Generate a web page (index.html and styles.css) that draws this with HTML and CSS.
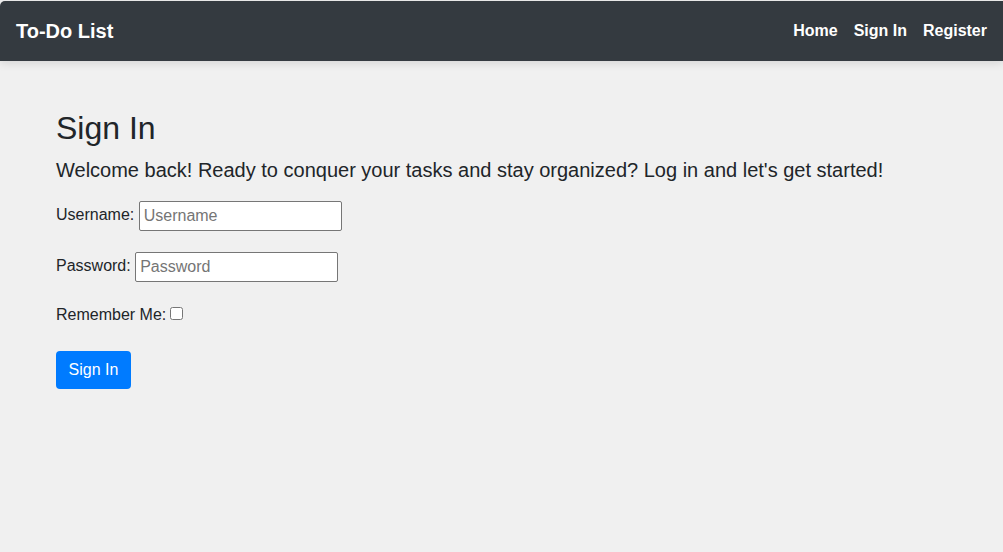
FILE: index.html
```html
<!DOCTYPE html>
<html lang="en">
<head>
<meta charset="utf-8">
<title>Sign In - To-Do List</title>
<link rel="stylesheet" href="styles.css">
</head>
<body>
<header class="navbar">
  <a class="brand" href="#">To-Do List</a>
  <nav class="nav-links">
    <a href="#">Home</a>
    <a href="#">Sign In</a>
    <a href="#">Register</a>
  </nav>
</header>
<main class="content">
  <h1 class="title">Sign In</h1>
  <p class="lead">Welcome back! Ready to conquer your tasks and stay organized? Log in and let's get started!</p>
  <form class="signin-form">
    <div class="form-row">
      <label for="username">Username:</label> <input class="text-input" type="text" id="username" placeholder="Username">
    </div>
    <div class="form-row">
      <label for="password">Password:</label> <input class="text-input" type="password" id="password" placeholder="Password">
    </div>
    <div class="form-row check-row">
      <label for="remember">Remember Me:</label> <input class="check" type="checkbox" id="remember">
    </div>
    <button class="btn-primary" type="submit">Sign In</button>
  </form>
</main>
</body>
</html>
```

FILE: styles.css
```css
html, body {
  margin: 0;
  padding: 0;
}
body {
  background: #f0f0f0;
  color: #212529;
  font-family: "Liberation Sans", Arial, sans-serif;
  font-size: 16px;
  line-height: 1.5;
  min-height: 552px;
}
.navbar {
  margin-top: 1px;
  height: 60px;
  background: #343a40;
  border-top-left-radius: 5px;
  display: flex;
  align-items: center;
  justify-content: space-between;
  padding: 0 16px;
  box-shadow: 0 2px 10px rgba(0, 0, 0, 0.12);
}
.brand {
  color: #ffffff;
  font-weight: bold;
  font-size: 20px;
  text-decoration: none;
}
.nav-links {
  display: flex;
  gap: 16px;
}
.nav-links a {
  color: #ffffff;
  font-weight: bold;
  font-size: 16px;
  text-decoration: none;
}
.content {
  padding: 48px 56px 0;
}
.title {
  margin: 0 0 8px;
  font-size: 32px;
  font-weight: 400;
  line-height: 1.2;
}
.lead {
  margin: 0 0 16px;
  font-size: 20px;
  line-height: 1.5;
}
.signin-form {
  margin: 0;
}
.form-row {
  margin-bottom: 21px;
}
.check-row {
  margin-bottom: 24px;
}
.text-input {
  box-sizing: border-box;
  width: 203px;
  height: 30px;
  padding: 1px 4px;
  border: 1px solid #767676;
  border-radius: 2px;
  font-family: "Liberation Sans", Arial, sans-serif;
  font-size: 16px;
  background: #ffffff;
  color: #212529;
  vertical-align: middle;
}
.text-input::placeholder {
  color: #757575;
}
.check {
  margin: 0 0 0 -1px;
  width: 13px;
  height: 13px;
  vertical-align: 0;
}
.btn-primary {
  background: #007bff;
  color: #ffffff;
  border: none;
  border-radius: 4px;
  padding: 10px 12.5px;
  font-family: "Liberation Sans", Arial, sans-serif;
  font-size: 16px;
  line-height: 18px;
  cursor: pointer;
}
```
